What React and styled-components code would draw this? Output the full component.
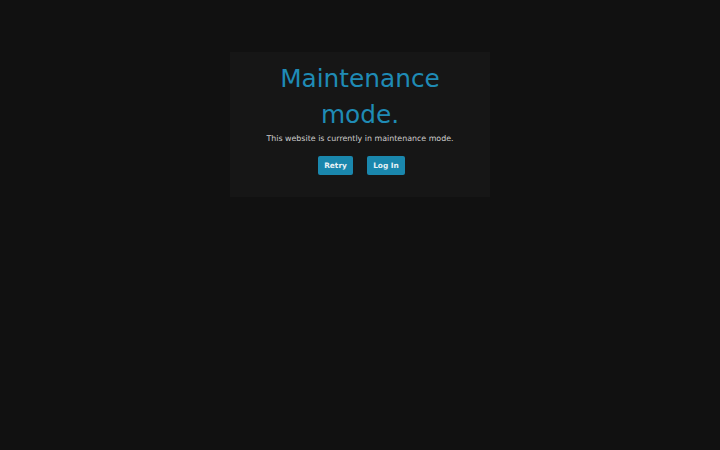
import React from "react";
import styled, { createGlobalStyle } from "styled-components";

const Global = createGlobalStyle`
  html, body { margin: 0; padding: 0; background: #111111; height: 100%; }
  body { font-family: "DejaVu Sans", "Noto Sans", sans-serif; }
  #root { min-height: 100vh; }
`;

const Page = styled.div`
  min-height: 450px;
  display: flex;
  justify-content: center;
  align-items: flex-start;
  padding-top: 52px;
  box-sizing: border-box;
`;

const Card = styled.div`
  width: 260px;
  height: 145px;
  box-sizing: border-box;
  background: #161616;
  display: flex;
  flex-direction: column;
  align-items: center;
  padding: 9px 20px 0;
`;

const Title = styled.h1`
  margin: 0;
  font-family: "DejaVu Sans", sans-serif;
  font-weight: 400;
  font-size: 24.8px;
  line-height: 36px;
  color: #1f8bb5;
  text-align: center;
  width: 170px;
`;

const Text = styled.p`
  margin: 0;
  font-size: 7.9px;
  line-height: 12px;
  color: #cdcdcd;
  text-align: center;
`;

const Buttons = styled.div`
  display: flex;
  gap: 14px;
  margin: 11px 0 0 3px;
`;

const Button = styled.button`
  height: 19px;
  width: ${(p) => p.$w}px;
  padding: 0;
  border: none;
  border-radius: 2px;
  background: #1a87ad;
  color: #e8f2f6;
  font-family: "DejaVu Sans", sans-serif;
  font-weight: 700;
  font-size: 7.4px;
  cursor: pointer;
`;

export default function App() {
  return (
    <>
      <Global />
      <Page>
        <Card>
          <Title>Maintenance mode.</Title>
          <Text>This website is currently in maintenance mode.</Text>
          <Buttons>
            <Button $w={35}>Retry</Button>
            <Button $w={38}>Log In</Button>
          </Buttons>
        </Card>
      </Page>
    </>
  );
}
